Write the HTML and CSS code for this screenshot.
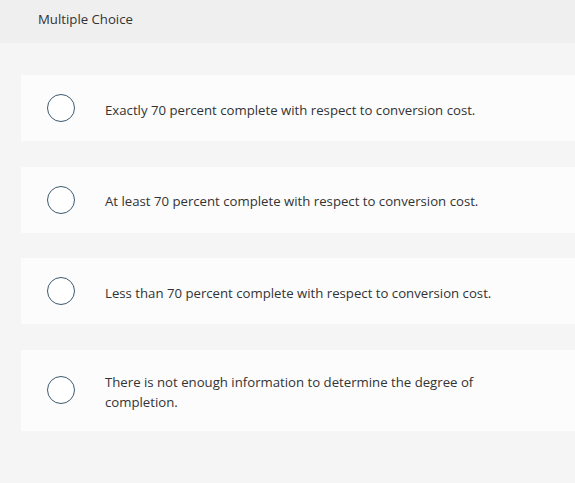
FILE: index.html
```html
<!DOCTYPE html>
<html>
<head>
<meta charset="utf-8">
<link rel="stylesheet" href="styles.css">
</head>
<body>
<header class="head">Multiple Choice</header>
<main class="choices">
  <div class="choice"><span class="radio"></span><span class="label">Exactly 70 percent complete with respect to conversion cost.</span></div>
  <div class="choice"><span class="radio"></span><span class="label">At least 70 percent complete with respect to conversion cost.</span></div>
  <div class="choice"><span class="radio"></span><span class="label">Less than 70 percent complete with respect to conversion cost.</span></div>
  <div class="choice"><span class="radio"></span><span class="label">There is not enough information to determine the degree of completion.</span></div>
</main>
</body>
</html>
```
FILE: styles.css
```css
html, body {
  margin: 0;
  padding: 0;
  background: #f5f5f5;
  font-family: "Open Sans", "Liberation Sans", sans-serif;
  color: #333;
}
.head {
  height: 43px;
  box-sizing: border-box;
  background: #efefef;
  padding: 10px 0 0 38px;
  font-size: 13.2px;
  line-height: 18px;
  color: #333;
}
.choices {
  display: flex;
  flex-direction: column;
  gap: 25.5px;
  padding: 32px 0 0 21px;
}
.choice {
  display: flex;
  align-items: center;
  min-height: 66px;
  box-sizing: border-box;
  padding: 0 70px 0 26px;
  background: #fcfcfc;
}
.radio {
  flex: none;
  width: 28px;
  height: 28px;
  box-sizing: border-box;
  border: 1.5px solid #3d5a6e;
  border-radius: 50%;
  background: #fff;
  margin-right: 30px;
}
.label {
  font-size: 13.2px;
  line-height: 20px;
  padding: 22px 0 19px;
}
```
